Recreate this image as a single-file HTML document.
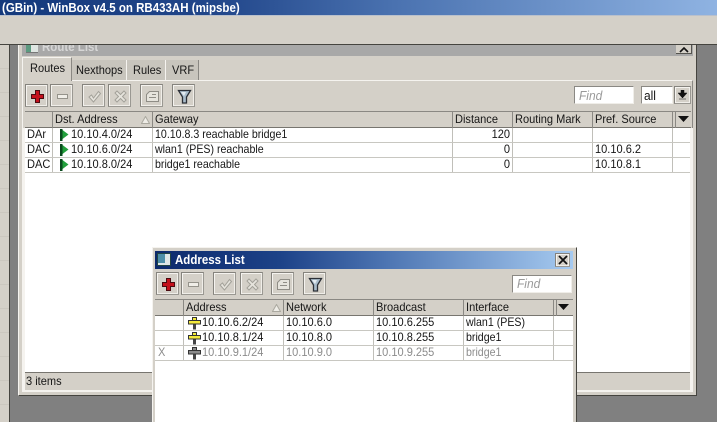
<!DOCTYPE html>
<html><head><meta charset="utf-8"><style>
html,body{margin:0;padding:0}
body{width:717px;height:422px;overflow:hidden;position:relative;background:#808080;font:12px "Liberation Sans",sans-serif;color:#161616}
div,span.t,svg.a{position:absolute;box-sizing:border-box}
.t{position:absolute;white-space:nowrap;line-height:15px;height:15px;transform:scaleX(.92);transform-origin:0 0}
.s{transform:scaleX(.885)}
.r{transform-origin:100% 0}
.b{font-weight:bold;font-size:13px;transform:scaleX(.885)}
.g{color:#8c8c8c}
.btn{background:#d4d0c8;border:1px solid;border-color:#85837d #9a9892 #9a9892 #85837d;box-shadow:inset 1px 1px 0 #f5f3ef,inset -1px -1px 0 #f0eee9;height:23px;width:23px}
.btn svg{position:absolute;left:2px;top:2px}
.hd{background:#d4d0c8;border-top:1px solid #8a8883;border-bottom:1px solid #77756f}
.vl{width:1px;background:#c0bfb9}
.hl{height:1px;background:#c8c7c1}
.hv{width:1px;background:#8a8883}
.inp{background:#fff;border:1px solid;border-color:#8a8883 #f0eee9 #f0eee9 #8a8883}
</style></head><body>
<svg width="0" height="0" style="position:absolute"><defs>
<symbol id="plus" viewBox="0 0 19 19"><path d="M7.500 3.500h4v4h4v4h-4v4h-4v-4h-4v-4h4z" fill="#c4101c" stroke="#4a0a10" stroke-width="1"/></symbol>
<symbol id="minus" viewBox="0 0 19 19"><rect x="4.500" y="7.500" width="10" height="4" fill="#f0eee8" stroke="#95938b"/></symbol>
<symbol id="check" viewBox="0 0 19 19"><path d="M4 10l2.500-2 2 3 5-6.500 2 2-7 8.500z" fill="#e6e4dd" stroke="#a3a199"/></symbol>
<symbol id="x" viewBox="0 0 19 19"><path d="M4 6l2-2 3.500 3.500L13 4l2 2-3.500 3.500L15 13l-2 2-3.500-3.500L6 15l-2-2 3.500-3.500z" fill="#e6e4dd" stroke="#a3a199"/></symbol>
<symbol id="note" viewBox="0 0 19 19"><path d="M3.500 7.500l3-3h9v10h-12z" fill="#e6e4dd" stroke="#8f8d86"/><path d="M9 7.500h4M6 10.500h7" stroke="#8f8d86"/></symbol>
<symbol id="filter" viewBox="0 0 19 19"><path d="M3.500 3.500h12l-4 6.500v6h-4v-6z" fill="#a9bccb" stroke="#2b2f36" stroke-width="1.300"/><path d="M6 5h5l-2 4z" fill="#e4ebf0"/></symbol>
<symbol id="flag" viewBox="0 0 9 12"><path d="M0 0h2.500v12H0z" fill="#0a4a1e"/><path d="M2.500 1l6 4.500-6 4.500z" fill="#22a03c"/></symbol>
<symbol id="addr" viewBox="0 0 13 13"><path d="M5 6h3v6.500H5z" fill="#444"/><path d="M4.500 .5h4v3h-4z" fill="currentColor" stroke="#333"/><path d="M.5 3.500h12v3.500H.5z" fill="currentColor" stroke="#333"/></symbol>
</defs></svg>

<!-- top chrome -->
<div style="left:0;top:0;width:717px;height:15px;background:linear-gradient(90deg,#14397c 0,#21468a 30%,#4a72b0 55%,#8fb3e2 100%)"></div>
<div style="left:0;top:15px;width:717px;height:29px;background:#d4d0c8;border-top:1px solid #b9c0cc"></div>
<div style="left:0;top:44px;width:717px;height:1px;background:#45443f"></div>
<span class="t b" style="left:2px;top:0;color:#fff">(GBin) - WinBox v4.5 on RB433AH (mipsbe)</span>
<div style="left:0;top:45px;width:9px;height:377px;background:repeating-linear-gradient(180deg,#d4d0c8 0,#d4d0c8 23px,#cbc7bf 23px,#cbc7bf 24px)"></div>
<div style="left:9px;top:45px;width:1px;height:377px;background:#45443f"></div>

<!-- Route List window -->
<div style="left:18px;top:45px;width:679px;height:351px;background:#d4d0c8;border-right:1px solid #45443f;border-bottom:1px solid #45443f;border-left:1px solid #f5f3ef"></div>
<div style="left:22px;top:45px;width:671px;height:11px;background:#a8a8a8"></div>
<div style="left:26px;top:45px;width:12px;height:8px;background:#dfe6e2;border-bottom:1px solid #777"></div>
<div style="left:26px;top:45px;width:5px;height:7px;background:#5c9a80"></div>
<span class="t b" style="left:42px;top:40px;height:13px;line-height:13px;color:#d6d6d6;clip-path:inset(5px 0 0 0)">Route List</span>
<div style="left:676px;top:45px;width:16px;height:9px;background:#d4d0c8;border-right:1px solid #55544f;border-bottom:1px solid #55544f"></div>
<svg class="a" style="left:679px;top:46px" width="10" height="7"><path d="M1 6l4-4 4 4" fill="none" stroke="#111" stroke-width="1.600"/></svg>

<!-- tab panel -->
<div style="left:22px;top:80px;width:671px;height:312px;background:#d4d0c8;border-top:1px solid #f5f3ef;border-left:1px solid #f5f3ef;border-right:1px solid #8a8883"></div>
<div style="left:22px;top:57px;width:50px;height:24px;background:#d4d0c8;border:1px solid #f5f3ef;border-bottom:none;border-right-color:#8a8883"></div>
<div style="left:72px;top:60px;width:55px;height:20px;background:#c8c5bd;border-right:1px solid #f5f3ef"></div>
<div style="left:127px;top:60px;width:39px;height:20px;background:#c8c5bd;border-right:1px solid #f5f3ef"></div>
<div style="left:166px;top:60px;width:33px;height:20px;background:#c8c5bd;border-right:1px solid #8a8883"></div>
<span class="t" style="left:30px;top:61px">Routes</span>
<span class="t" style="left:76px;top:63px">Nexthops</span>
<span class="t" style="left:133px;top:63px">Rules</span>
<span class="t" style="left:172px;top:63px">VRF</span>

<!-- toolbar -->
<div class="btn" style="left:25px;top:84px"><svg width="19" height="19"><use href="#plus"/></svg></div>
<div class="btn" style="left:50px;top:84px"><svg width="19" height="19"><use href="#minus"/></svg></div>
<div class="btn" style="left:82px;top:84px"><svg width="19" height="19"><use href="#check"/></svg></div>
<div class="btn" style="left:108px;top:84px"><svg width="19" height="19"><use href="#x"/></svg></div>
<div class="btn" style="left:140px;top:84px"><svg width="19" height="19"><use href="#note"/></svg></div>
<div class="btn" style="left:172px;top:84px"><svg width="19" height="19"><use href="#filter"/></svg></div>
<div class="inp" style="left:574px;top:86px;width:60px;height:18px"></div>
<span class="t" style="left:579px;top:88px;color:#9a9a9a;font-style:italic;font-size:13px">Find</span>
<div class="inp" style="left:641px;top:86px;width:32px;height:18px"></div>
<span class="t" style="left:644px;top:88px;font-size:13px">all</span>
<div class="btn" style="left:674px;top:86px;width:17px;height:18px"></div>
<svg class="a" style="left:678px;top:90px" width="9" height="10"><path d="M0 3h9L4.500 8z M3 0h3v4H3z M1 9h7" fill="#111" stroke="#111" stroke-width=".5"/></svg>

<!-- route table -->
<div style="left:25px;top:128px;width:666px;height:244px;background:#fff"></div>
<div class="hd" style="left:25px;top:111px;width:666px;height:17px"></div>
<div class="hv" style="left:52px;top:111px;height:17px"></div>
<div class="hv" style="left:152px;top:111px;height:17px"></div>
<div class="hv" style="left:452px;top:111px;height:17px"></div>
<div class="hv" style="left:512px;top:111px;height:17px"></div>
<div class="hv" style="left:592px;top:111px;height:17px"></div>
<div class="hv" style="left:672px;top:111px;height:17px"></div>
<div class="hv" style="left:675px;top:111px;height:17px"></div>
<div class="vl" style="left:52px;top:128px;height:45px"></div>
<div class="vl" style="left:152px;top:128px;height:45px"></div>
<div class="vl" style="left:452px;top:128px;height:45px"></div>
<div class="vl" style="left:512px;top:128px;height:45px"></div>
<div class="vl" style="left:592px;top:128px;height:45px"></div>
<div class="vl" style="left:672px;top:128px;height:45px"></div>
<div class="hl" style="left:25px;top:142px;width:666px"></div>
<div class="hl" style="left:25px;top:157px;width:666px"></div>
<div class="hl" style="left:25px;top:172px;width:666px"></div>
<span class="t" style="left:55px;top:112px">Dst. Address</span>
<svg class="a" style="left:141px;top:116px" width="9" height="8"><path d="M4.500 .5l4 7h-8z" fill="#eeece6" stroke="#aaa89f"/></svg>
<span class="t" style="left:155px;top:112px">Gateway</span>
<span class="t" style="left:455px;top:112px">Distance</span>
<span class="t" style="left:515px;top:112px">Routing Mark</span>
<span class="t" style="left:595px;top:112px">Pref. Source</span>
<svg class="a" style="left:678px;top:116px" width="11" height="7"><path d="M0 0h11L5.500 6z" fill="#111"/></svg>

<span class="t" style="left:27px;top:127px">DAr</span>
<svg class="a" style="left:60px;top:129px" width="9" height="12"><use href="#flag"/></svg>
<span class="t" style="left:71px;top:127px">10.10.4.0/24</span>
<span class="t s" style="left:155px;top:127px">10.10.8.3 reachable bridge1</span>
<span class="t r" style="left:480px;top:127px;width:30px;text-align:right">120</span>

<span class="t" style="left:27px;top:142px">DAC</span>
<svg class="a" style="left:60px;top:144px" width="9" height="12"><use href="#flag"/></svg>
<span class="t" style="left:71px;top:142px">10.10.6.0/24</span>
<span class="t s" style="left:155px;top:142px">wlan1 (PES) reachable</span>
<span class="t r" style="left:480px;top:142px;width:30px;text-align:right">0</span>
<span class="t" style="left:595px;top:142px">10.10.6.2</span>

<span class="t" style="left:27px;top:157px">DAC</span>
<svg class="a" style="left:60px;top:159px" width="9" height="12"><use href="#flag"/></svg>
<span class="t" style="left:71px;top:157px">10.10.8.0/24</span>
<span class="t s" style="left:155px;top:157px">bridge1 reachable</span>
<span class="t r" style="left:480px;top:157px;width:30px;text-align:right">0</span>
<span class="t" style="left:595px;top:157px">10.10.8.1</span>

<!-- status -->
<div style="left:25px;top:372px;width:665px;height:18px;background:#d4d0c8;border-top:1px solid #77756f"></div>
<span class="t" style="left:26px;top:374px">3 items</span>
<div style="left:23px;top:390px;width:670px;height:2px;background:#f5f3ef"></div>
<div style="left:690px;top:128px;width:3px;height:264px;background:#f5f3ef"></div>
<div style="left:23px;top:128px;width:2px;height:264px;background:#f5f3ef"></div>

<!-- Address List window -->
<div style="left:152px;top:247px;width:425px;height:175px;background:#d4d0c8;border-top:1px solid #f5f3ef;border-left:1px solid #f5f3ef;border-right:1px solid #45443f"></div>
<div style="left:155px;top:251px;width:418px;height:18px;background:linear-gradient(90deg,#0c2a6c 0,#1d4288 30%,#4c74b2 55%,#a6caf0 100%)"></div>
<div style="left:157px;top:253px;width:14px;height:13px;background:#dfe6e6;border:1px solid #244"></div>
<div style="left:158px;top:254px;width:7px;height:9px;background:#4d8ea8"></div>
<span class="t b" style="left:175px;top:252px;color:#fff">Address List</span>
<div class="btn" style="left:555px;top:253px;width:15px;height:14px"></div>
<svg class="a" style="left:558px;top:255px" width="10" height="10"><path d="M1 1l8 8M9 1l-8 8" stroke="#111" stroke-width="1.800"/></svg>

<div class="btn" style="left:156px;top:272px"><svg width="19" height="19"><use href="#plus"/></svg></div>
<div class="btn" style="left:181px;top:272px"><svg width="19" height="19"><use href="#minus"/></svg></div>
<div class="btn" style="left:213px;top:272px"><svg width="19" height="19"><use href="#check"/></svg></div>
<div class="btn" style="left:240px;top:272px"><svg width="19" height="19"><use href="#x"/></svg></div>
<div class="btn" style="left:271px;top:272px"><svg width="19" height="19"><use href="#note"/></svg></div>
<div class="btn" style="left:303px;top:272px"><svg width="19" height="19"><use href="#filter"/></svg></div>
<div class="inp" style="left:512px;top:275px;width:60px;height:18px"></div>
<span class="t" style="left:517px;top:276px;color:#9a9a9a;font-style:italic;font-size:13px">Find</span>

<div style="left:155px;top:316px;width:418px;height:106px;background:#fff"></div>
<div class="hd" style="left:155px;top:299px;width:418px;height:17px"></div>
<div class="hv" style="left:183px;top:299px;height:17px"></div>
<div class="hv" style="left:283px;top:299px;height:17px"></div>
<div class="hv" style="left:373px;top:299px;height:17px"></div>
<div class="hv" style="left:463px;top:299px;height:17px"></div>
<div class="hv" style="left:553px;top:299px;height:17px"></div>
<div class="hv" style="left:556px;top:299px;height:17px"></div>
<div class="vl" style="left:183px;top:316px;height:45px"></div>
<div class="vl" style="left:283px;top:316px;height:45px"></div>
<div class="vl" style="left:373px;top:316px;height:45px"></div>
<div class="vl" style="left:463px;top:316px;height:45px"></div>
<div class="vl" style="left:553px;top:316px;height:45px"></div>
<div class="hl" style="left:155px;top:330px;width:418px"></div>
<div class="hl" style="left:155px;top:345px;width:418px"></div>
<div class="hl" style="left:155px;top:360px;width:418px"></div>
<span class="t" style="left:186px;top:300px">Address</span>
<svg class="a" style="left:272px;top:304px" width="9" height="8"><path d="M4.500 .5l4 7h-8z" fill="#eeece6" stroke="#aaa89f"/></svg>
<span class="t" style="left:286px;top:300px">Network</span>
<span class="t" style="left:376px;top:300px">Broadcast</span>
<span class="t" style="left:466px;top:300px">Interface</span>
<svg class="a" style="left:558px;top:304px" width="11" height="7"><path d="M0 0h11L5.500 6z" fill="#111"/></svg>

<svg class="a" style="left:188px;top:317px;color:#f4ea3c" width="13" height="13"><use href="#addr"/></svg>
<span class="t" style="left:202px;top:315px">10.10.6.2/24</span>
<span class="t" style="left:286px;top:315px">10.10.6.0</span>
<span class="t" style="left:376px;top:315px">10.10.6.255</span>
<span class="t s" style="left:466px;top:315px">wlan1 (PES)</span>

<svg class="a" style="left:188px;top:332px;color:#f4ea3c" width="13" height="13"><use href="#addr"/></svg>
<span class="t" style="left:202px;top:330px">10.10.8.1/24</span>
<span class="t" style="left:286px;top:330px">10.10.8.0</span>
<span class="t" style="left:376px;top:330px">10.10.8.255</span>
<span class="t s" style="left:466px;top:330px">bridge1</span>

<span class="t g" style="left:158px;top:345px">X</span>
<svg class="a" style="left:188px;top:347px;color:#8c8c8c" width="13" height="13"><use href="#addr"/></svg>
<span class="t g" style="left:202px;top:345px">10.10.9.1/24</span>
<span class="t g" style="left:286px;top:345px">10.10.9.0</span>
<span class="t g" style="left:376px;top:345px">10.10.9.255</span>
<span class="t g s" style="left:466px;top:345px">bridge1</span>
</body></html>
